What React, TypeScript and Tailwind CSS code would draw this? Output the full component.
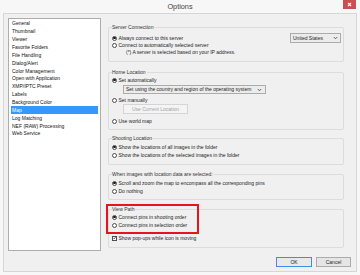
import React from "react";

const items = [
  "General",
  "Thumbnail",
  "Viewer",
  "Favorite Folders",
  "File Handling",
  "Dialog/Alert",
  "Color Management",
  "Open with Application",
  "XMP/IPTC Preset",
  "Labels",
  "Background Color",
  "Map",
  "Log Matching",
  "NEF (RAW) Processing",
  "Web Service",
];

function Radio({ checked }: { checked?: boolean }) {
  return (
    <span className="w-[5px] h-[5px] rounded-full border-[0.8px] border-[#4d4d4d] bg-white flex items-center justify-center shrink-0">
      {checked && <span className="w-[2.4px] h-[2.4px] rounded-full bg-[#1a1a1a]" />}
    </span>
  );
}

function RadioRow({ checked, label, h }: { checked?: boolean; label: string; h: string }) {
  return (
    <div className={`flex items-center gap-[1.5px] ${h}`}>
      <Radio checked={checked} />
      <span className="whitespace-nowrap">{label}</span>
    </div>
  );
}

function Group({ label, className, children }: { label: string; className: string; children?: React.ReactNode }) {
  return (
    <div className={`relative border border-[#dcdcdc] rounded-[2px] ${className}`}>
      <span className="absolute left-[3px] top-[-4px] leading-[7px] bg-[#f0f0f0] pr-[1px] text-[#333] whitespace-nowrap">
        {label}
      </span>
      {children}
    </div>
  );
}

function Chevron() {
  return (
    <svg width="5" height="4" viewBox="0 0 5 4" className="shrink-0">
      <path d="M0.8 1 L2.5 2.8 L4.2 1" fill="none" stroke="#444" strokeWidth="0.8" />
    </svg>
  );
}

export default function App() {
  return (
    <div className="w-[360px] h-[275px] bg-[#f7f7f7] flex flex-col font-['Liberation_Sans',Arial,sans-serif] text-[5px] leading-none text-[#1e1e1e] overflow-hidden">
      {/* title bar */}
      <div className="relative h-[13px] flex items-center justify-center shrink-0">
        <span className="text-[7.3px] text-[#444]">Options</span>
        <div className="absolute right-[4px] top-0 w-[13px] h-[9px] bg-[#c75050] flex items-center justify-center">
          <svg width="5" height="5" viewBox="0 0 5 5">
            <path d="M1 1 L4 4 M4 1 L1 4" stroke="#fff" strokeWidth="1.1" />
          </svg>
        </div>
      </div>

      {/* body */}
      <div className="mx-[3px] h-[259px] border border-[#d6d6d6] bg-[#f0f0f0] flex flex-col pt-[4px] shrink-0">
        <div className="flex pl-[4px]">
          {/* list */}
          <div className="w-[93px] h-[233px] border border-[#adadad] bg-white pt-[1px] px-[2px] shrink-0">
            {items.map((it) => (
              <div
                key={it}
                className={`h-[7.86px] flex items-center pl-[1px] whitespace-nowrap ${
                  it === "Map" ? "bg-[#3399ff] text-white" : "text-[#111]"
                }`}
              >
                {it}
              </div>
            ))}
          </div>

          {/* right column */}
          <div className="ml-[7px] w-[236px] pt-[9px] flex flex-col">
            <Group label="Server Connection" className="h-[35px] flex items-start pl-[3px] pr-[2px] pt-[6.5px]">
              <div className="flex-1 flex flex-col">
                <RadioRow checked label="Always connect to this server" h="h-[7px]" />
                <RadioRow label="Connect to automatically selected server" h="h-[7px]" />
                <div className="h-[7px] flex items-center pl-[14px] whitespace-nowrap">
                  (*) A server is selected based on your IP address.
                </div>
              </div>
              <div className="mt-[-1.5px] w-[51px] h-[10px] border border-[#acacac] bg-[#ececec] flex items-center justify-between pl-[2px] pr-[2px]">
                <span>United States</span>
                <Chevron />
              </div>
            </Group>

            <Group label="Home Location" className="mt-[10px] h-[58px] pl-[3px] pt-[3.5px] flex flex-col">
              <RadioRow checked label="Set automatically" h="h-[7px]" />
              <div className="ml-[11px] mt-[1.5px] w-[143px] h-[9px] border border-[#acacac] bg-[#ececec] flex items-center justify-between pl-[2px] pr-[3px]">
                <span className="whitespace-nowrap">Set using the country and region of the operating system</span>
                <Chevron />
              </div>
              <div className="mt-[2.5px]">
                <RadioRow label="Set manually" h="h-[7px]" />
              </div>
              <div className="ml-[11px] mt-[0.5px] w-[65px] h-[10px] border border-[#d5d5d5] bg-[#f4f4f4] text-[#a3a3a3] flex items-center justify-center">
                Use Current Location
              </div>
              <div className="mt-[3.5px]">
                <RadioRow label="Use world map" h="h-[7px]" />
              </div>
            </Group>

            <Group label="Shooting Location" className="mt-[8px] h-[27px] pl-[3px] pt-[4px] flex flex-col">
              <RadioRow checked label="Show the locations of all images in the folder" h="h-[8px]" />
              <RadioRow label="Show the locations of the selected images in the folder" h="h-[8px]" />
            </Group>

            <Group label="When images with location data are selected:" className="mt-[9px] h-[26px] pl-[3px] pt-[4px] flex flex-col">
              <RadioRow checked label="Scroll and zoom the map to encompass all the corresponding pins" h="h-[8px]" />
              <RadioRow label="Do nothing" h="h-[8px]" />
            </Group>

            <Group label="View Path" className="mt-[9px] h-[39px] pl-[3px] pt-[3px] flex flex-col">
              <RadioRow checked label="Connect pins in shooting order" h="h-[8px]" />
              <RadioRow label="Connect pins in selection order" h="h-[8px]" />
              <div className="mt-[5px] h-[8px] flex items-center gap-[1.5px]">
                <span className="w-[5px] h-[5px] border-[0.8px] border-[#4d4d4d] bg-white flex items-center justify-center shrink-0">
                  <svg width="4" height="4" viewBox="0 0 4 4">
                    <path d="M0.6 2 L1.6 3 L3.4 0.8" fill="none" stroke="#111" strokeWidth="0.9" />
                  </svg>
                </span>
                <span className="whitespace-nowrap">Show pop-ups while icon is moving</span>
              </div>
              <div className="absolute left-[-3px] top-[-6px] w-[93px] h-[30px] border-2 border-[#e8141b]" />
            </Group>
          </div>
        </div>

        {/* buttons */}
        <div className="mt-[6px] flex justify-end gap-[4px] pr-[5px]">
          <div className="w-[36px] h-[10px] border border-[#3c8fe0] bg-[#e9e9e9] flex items-center justify-center">OK</div>
          <div className="w-[35px] h-[10px] border border-[#acacac] bg-[#e5e5e5] flex items-center justify-center">Cancel</div>
        </div>
      </div>
    </div>
  );
}
